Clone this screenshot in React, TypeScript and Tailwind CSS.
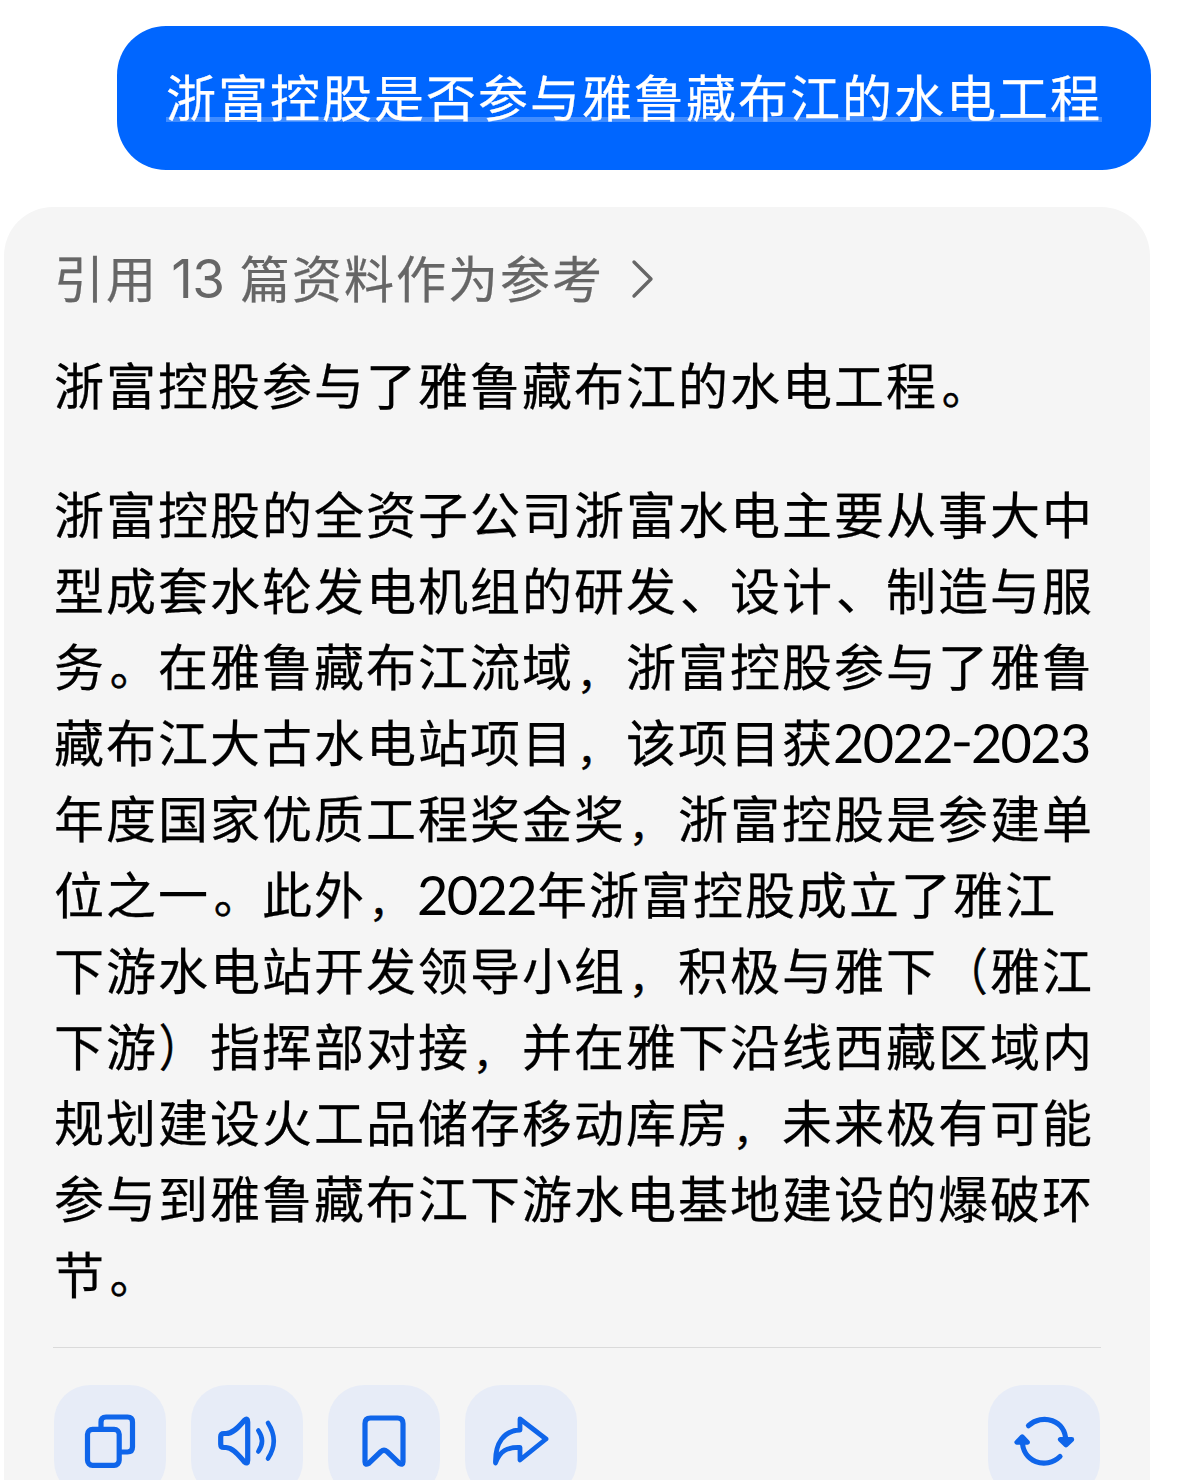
import type { ReactNode } from 'react';

const lines = [
  '浙富控股的全资子公司浙富水电主要从事大中',
  '型成套水轮发电机组的研发、设计、制造与服',
  '务。在雅鲁藏布江流域，浙富控股参与了雅鲁',
  '藏布江大古水电站项目，该项目获2022-2023',
  '年度国家优质工程奖金奖，浙富控股是参建单',
  '位之一。此外，2022年浙富控股成立了雅江',
  '下游水电站开发领导小组，积极与雅下（雅江',
  '下游）指挥部对接，并在雅下沿线西藏区域内',
  '规划建设火工品储存移动库房，未来极有可能',
  '参与到雅鲁藏布江下游水电基地建设的爆破环',
  '节。',
];

// Numerals use a rounder Latin face; punctuation gets small optical shifts.
function Rich({ text }: { text: string }) {
  return (
    <>
      {text.split(/(\d+|-|，|。|、|（|）)/).map((part, i) => {
        if (/^\d+$/.test(part)) return <span key={i} className="inline-block -translate-x-px translate-y-px font-['Lato'] text-[54px] leading-none tracking-[-1.6px] [-webkit-text-stroke:0]">{part}</span>;
        if (part === '-') return <span key={i} className="inline-block w-[19px] origin-left -translate-x-[2px] -translate-y-[5px] scale-x-[1.4] font-['Lato'] text-[42px] leading-none tracking-normal [-webkit-text-stroke:0.5px]">-</span>;
        if (part === '，') return <span key={i} className="inline-block -translate-x-[2px] translate-y-[7px] scale-[0.82] leading-none [-webkit-text-stroke:0.5px]">，</span>;
        if (part === '。') return <span key={i} className="inline-block translate-x-[2px] translate-y-px scale-[0.93] leading-none [-webkit-text-stroke:0.5px]">。</span>;
        if (part === '、') return <span key={i} className="inline-block translate-x-[2px] leading-none">、</span>;
        if (part === '（') return <span key={i} className="inline-block translate-x-[3px] scale-x-[0.85] leading-none [-webkit-text-stroke:0.6px]">（</span>;
        if (part === '）') return <span key={i} className="inline-block -translate-x-[3px] scale-x-[0.85] leading-none [-webkit-text-stroke:0.6px]">）</span>;
        return part;
      })}
    </>
  );
}

function Action({ label, children }: { label: string; children: ReactNode }) {
  return (
    <button aria-label={label} className="h-28 w-28 shrink-0 rounded-[36px] bg-[#e7ecf7] text-[#0f65ea]">
      <svg viewBox="0 0 112 112" className="h-28 w-28" fill="none" stroke="currentColor" strokeWidth="5.2" strokeLinejoin="round" strokeLinecap="round">
        {children}
      </svg>
    </button>
  );
}

export default function App() {
  return (
    <div className="h-[1480px] w-[1187px] overflow-hidden bg-white pt-[26px] font-['Noto_Sans_CJK_SC',sans-serif] text-[50px] tracking-[2px]">
      <div className="ml-[117px] flex h-[144px] w-[1034px] justify-center rounded-[49px] bg-[#0066ff] pt-[31px] text-white">
        <p className="h-[65px] whitespace-nowrap border-b-5 border-white/25 leading-[76px] [-webkit-text-stroke:0.25px]">浙富控股是否参与雅鲁藏布江的水电工程</p>
      </div>
      <main className="mt-[37px] ml-1 h-[1400px] w-[1146px] rounded-[49px] bg-[#f5f5f5] px-[50px] pt-8 text-black [-webkit-text-stroke:0.25px]">
        <div className="flex h-[76px] items-center whitespace-nowrap leading-[76px] text-[#666]">
          <span className="-mt-[2px]">引用 <span className="inline-block w-[55.5px] font-['Inter'] text-[53px] leading-none tracking-[-0.5px] [-webkit-text-stroke:0]">13</span> 篇资料作为参考</span>
          <svg viewBox="0 0 24 40" className="mt-[3px] ml-[27px] h-10 w-6" fill="none" stroke="currentColor" strokeWidth="3.4" strokeLinecap="round" strokeLinejoin="round"><path d="M3 3 20 20 3 37" /></svg>
        </div>
        <p className="mt-[30px] h-[76px] leading-[76px]"><Rich text="浙富控股参与了雅鲁藏布江的水电工程。" /></p>
        <div className="mt-[53px]">
          {lines.map((line) => (
            <p key={line} className="h-[76px] whitespace-nowrap leading-[76px]"><Rich text={line} /></p>
          ))}
        </div>
        <hr className="mt-[37px] -ml-px w-[1048px] border-t border-[#dadada]" />
        <div className="mt-[37px] flex w-[1046px] gap-[25px]">
          <Action label="复制">
            <rect x="33.5" y="44.3" width="31.7" height="36" rx="5" />
            <path d="M47 44v-7q0-5 5-5h21.500q5 0 5 5v25q0 5-5 5H66" />
          </Action>
          <Action label="朗读">
            <path d="M33 48.500h2C43 48.500 49 40 53.500 35.200Q56.700 32.500 56.700 37v38.500Q56.700 79.500 53.500 77C49 72 43 63 35 62.500h-2q-3.300 0-3.300-3.300v-7.400q0-3.300 3.300-3.300Z" />
            <path d="M67.300 45.500q7.500 10.500 0 21M77 38q11.500 18 0 35.500" strokeWidth="4.600" />
          </Action>
          <Action label="收藏">
            <path d="M42.500 33h27q5.500 0 5.500 5.500V77q0 3.500-3.500 1.500L59 66.500q-3-2.500-6 0L40.500 78.500Q37 80.500 37 77V38.500Q37 33 42.500 33Z" />
          </Action>
          <Action label="分享">
            <path d="M55 34 81 54 55 75V62.500C42 62 35 66 30.500 78 30 58 39 45.500 55 45Z" strokeWidth="4.800" />
          </Action>
          <div className="ml-auto">
            <Action label="重新生成">
              <path d="M40.500 40.700C54 28 78 35 77.700 56M34.300 55C34 77 58 85 72 71.500" />
              <path d="M72.300 54.500h11.500L78 60ZM28.800 57.300h10.800l-5.400-5.600Z" fill="currentColor" strokeWidth="4.800" />
            </Action>
          </div>
        </div>
      </main>
    </div>
  );
}
